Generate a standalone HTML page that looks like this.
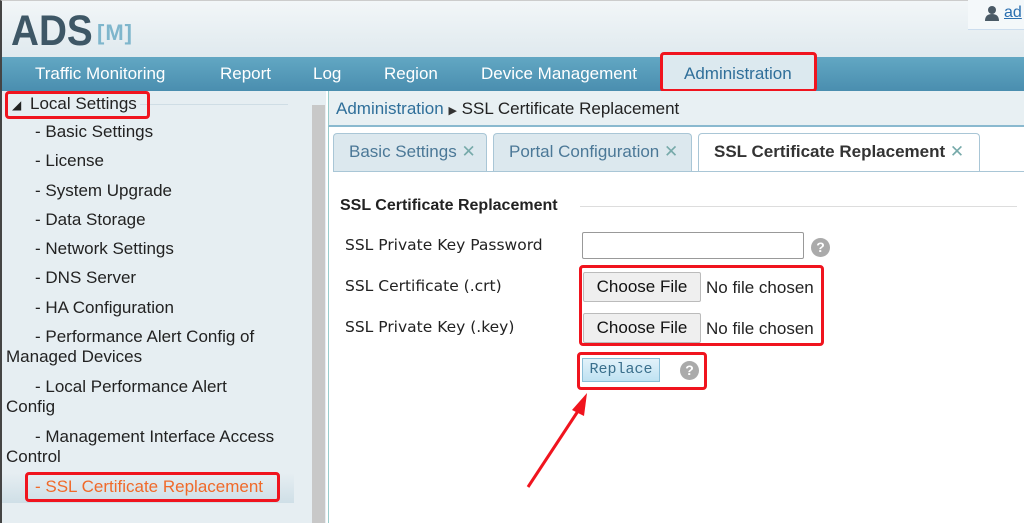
<!DOCTYPE html>
<html><head><meta charset="utf-8"><style>
*{margin:0;padding:0;box-sizing:border-box}
body{width:1024px;height:523px;overflow:hidden;font-family:"Liberation Sans",sans-serif;background:#fff;position:relative}
.a{position:absolute}
.red{position:absolute;border:3px solid #f0141e;border-radius:4px}
.side div{position:absolute;font-size:17px;color:#222;line-height:20px}
.lbl{position:absolute;color:#222;font-family:"DejaVu Sans","Liberation Sans",sans-serif;font-size:15.5px}
.cf{position:absolute;width:118px;height:30px;background:#efefef;border:1px solid #bbb;border-radius:2px;font-size:17px;text-align:center;line-height:28px;color:#111}
.nf{position:absolute;font-size:17px;color:#222}
.q{position:absolute;width:19px;height:19px;border-radius:50%;background:#aaa;color:#fff;font-weight:bold;font-size:14px;text-align:center;line-height:19px}
</style></head><body>
<div class="a" style="left:0;top:0;width:1024px;height:58px;background:linear-gradient(#f2f6f8,#dfe9ee);border-top:1px solid #ccc;border-left:2px solid #444"></div>
<div class="a" style="left:11px;top:7px;font-size:43px;font-weight:bold;color:#3e5766;transform:scaleX(0.9);transform-origin:left">ADS</div>
<div class="a" style="left:97px;top:20px;font-size:22px;font-weight:bold;color:#7fb6cc;letter-spacing:1px">[M]</div>
<div class="a" style="left:968px;top:0;width:56px;height:30px;background:#f4f8fa;border-bottom:1px solid #cde"></div>
<svg class="a" style="left:984px;top:5px" width="16" height="16"><circle cx="8" cy="5" r="4" fill="#4a5a66"/><path d="M1 16 Q1 9 8 9 Q15 9 15 16Z" fill="#4a5a66"/></svg>
<div class="a" style="left:1004px;top:4px;font-size:16px;color:#2a6fb0"><u>ad</u></div>
<div class="a" style="left:0;top:57px;width:1024px;height:34px;background:linear-gradient(#62a7c3,#4a8eaf);border-left:2px solid #444"></div>
<div class="a" style="top:64px;left:0;font-size:17px;color:#fff;width:1024px">
<span class="a" style="left:35px">Traffic Monitoring</span><span class="a" style="left:220px">Report</span><span class="a" style="left:313px">Log</span><span class="a" style="left:384px">Region</span><span class="a" style="left:481px">Device Management</span></div>
<div class="a" style="left:662px;top:57px;width:152px;height:34px;background:#dce9ef"></div>
<div class="a" style="left:684px;top:64px;font-size:17px;color:#2f6f9a">Administration</div>
<div class="red" style="left:660px;top:52px;width:157px;height:40px"></div>
<div class="a" style="left:0;top:91px;width:326px;height:432px;background:#e6eef2;border-left:2px solid #444"></div>
<div class="a" style="left:312px;top:105px;width:13px;height:418px;background:#c8c8c8"></div>
<div class="a" style="left:140px;top:104px;width:148px;height:1px;background:#cfdde5"></div>
<div class="side">
<div style="left:12px;top:95px;font-size:12px">&#9698;</div>
<div style="left:30px;top:94px">Local Settings</div>
<div style="left:35px;top:122px">- Basic Settings</div>
<div style="left:35px;top:151px">- License</div>
<div style="left:35px;top:181px">- System Upgrade</div>
<div style="left:35px;top:210px">- Data Storage</div>
<div style="left:35px;top:239px">- Network Settings</div>
<div style="left:35px;top:268px">- DNS Server</div>
<div style="left:35px;top:298px">- HA Configuration</div>
<div style="left:6px;top:327px;width:265px;text-indent:29px">- Performance Alert Config of Managed Devices</div>
<div style="left:6px;top:377px;width:240px;text-indent:29px">- Local Performance Alert Config</div>
<div style="left:6px;top:427px;width:285px;text-indent:29px">- Management Interface Access Control</div>
<div style="left:2px;top:473px;width:292px;height:30px;background:linear-gradient(#e6eef2,#cfdfe7)"></div>
<div style="left:35px;top:477px;color:#f06a2a">- SSL Certificate Replacement</div>
</div>
<div class="red" style="left:5px;top:91px;width:145px;height:28px"></div>
<div class="red" style="left:25px;top:472px;width:255px;height:30px"></div>
<div class="a" style="left:328px;top:91px;width:696px;height:36px;background:#e8f0f3;border-bottom:2px solid #8ab9cf;border-left:1px solid #9cc"></div>
<div class="a" style="left:336px;top:99px;font-size:17px;color:#2f6f9a">Administration <span style="color:#333;font-size:11px">&#9654;</span> <span style="color:#222">SSL Certificate Replacement</span></div>
<div class="a" style="left:328px;top:127px;width:696px;height:396px;background:#fff;border-left:1px solid #9cc"></div>
<div class="a" style="left:333px;top:133px;width:154px;height:38px;background:#dce8ee;border:1px solid #a9c6d6;border-bottom:none;border-radius:4px 4px 0 0"></div>
<div class="a" style="left:349px;top:142px;font-size:17px;color:#4b7897">Basic Settings <span style="color:#7aa">&#10005;</span></div>
<div class="a" style="left:493px;top:133px;width:199px;height:38px;background:#dce8ee;border:1px solid #a9c6d6;border-bottom:none;border-radius:4px 4px 0 0"></div>
<div class="a" style="left:509px;top:142px;font-size:17px;color:#4b7897">Portal Configuration <span style="color:#7aa">&#10005;</span></div>
<div class="a" style="left:698px;top:133px;width:282px;height:39px;background:#fff;border:1px solid #a9c6d6;border-bottom:none;border-radius:4px 4px 0 0"></div>
<div class="a" style="left:714px;top:142px;font-size:17px;color:#333;font-weight:bold">SSL Certificate Replacement <span style="color:#7aa;font-weight:normal">&#10005;</span></div>
<div class="a" style="left:333px;top:171px;width:691px;height:1px;background:#a9c6d6"></div>
<div class="a" style="left:340px;top:197px;font-size:16px;font-weight:bold;color:#222">SSL Certificate Replacement</div>
<div class="a" style="left:580px;top:206px;width:437px;height:1px;background:#ddd"></div>
<div class="lbl" style="left:345px;top:236px">SSL Private Key Password</div>
<div class="lbl" style="left:345px;top:277px">SSL Certificate (.crt)</div>
<div class="lbl" style="left:345px;top:318px">SSL Private Key (.key)</div>
<div class="a" style="left:582px;top:232px;width:222px;height:27px;border:1px solid #999;border-radius:2px"></div>
<div class="q" style="left:811px;top:238px">?</div>
<div class="cf" style="left:583px;top:272px">Choose File</div><div class="nf" style="left:706px;top:278px">No file chosen</div>
<div class="cf" style="left:583px;top:313px">Choose File</div><div class="nf" style="left:706px;top:319px">No file chosen</div>
<div class="red" style="left:579px;top:265px;width:245px;height:81px"></div>
<div class="a" style="left:582px;top:358px;width:78px;height:24px;background:linear-gradient(#e2f2fa,#bfe2f2);border:1px solid #8bbfd8;font-family:'Liberation Mono',monospace;font-size:15px;color:#3a6f8c;text-align:center;line-height:22px">Replace</div>
<div class="q" style="left:680px;top:361px">?</div>
<div class="red" style="left:577px;top:352px;width:130px;height:38px"></div>
<svg class="a" style="left:520px;top:390px" width="80" height="100"><line x1="8" y1="97" x2="60" y2="18" stroke="#f0141e" stroke-width="3"/><polygon points="67,3 52,20 64,26" fill="#f0141e"/></svg>
</body></html>
